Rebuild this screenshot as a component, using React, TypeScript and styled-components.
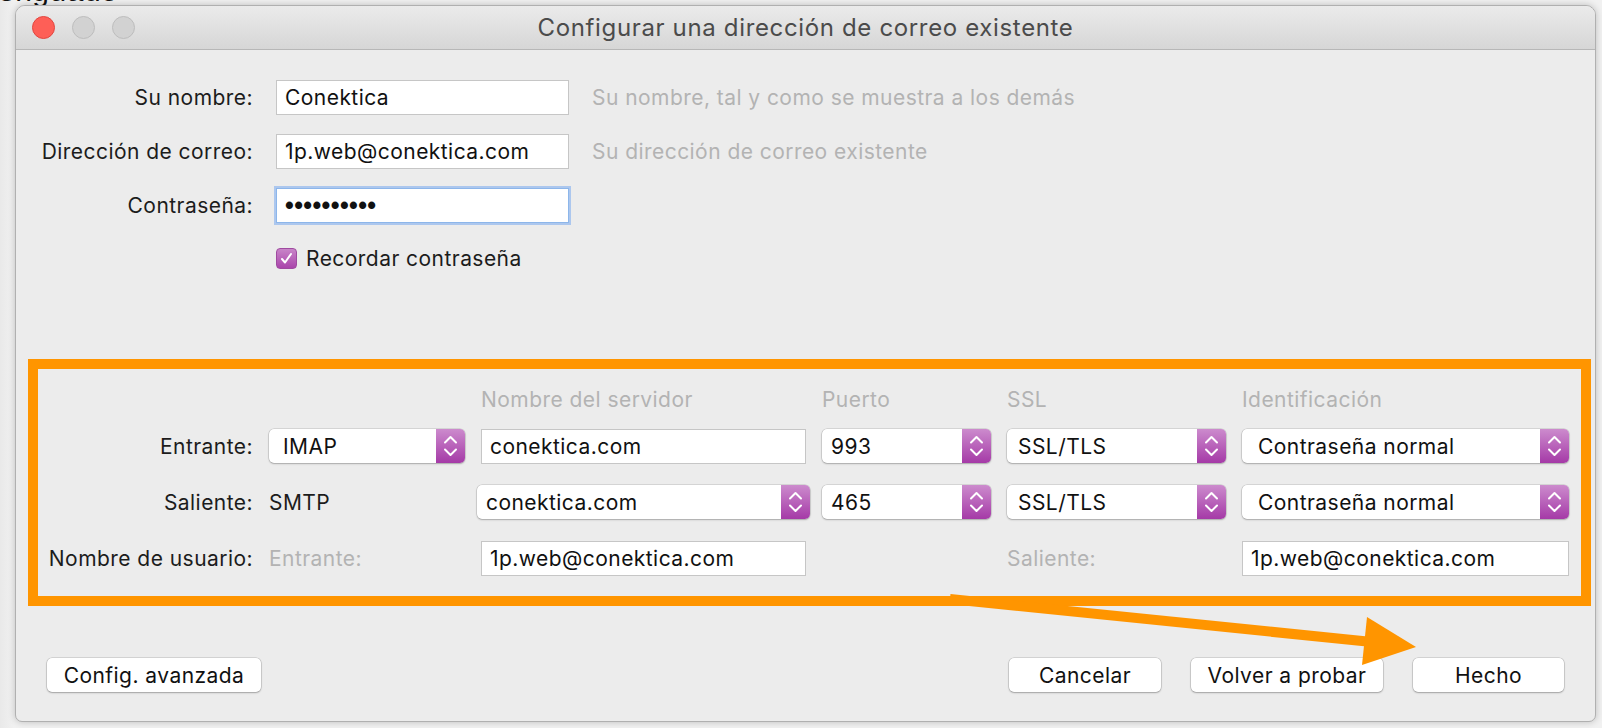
import React from "react";
import styled, { createGlobalStyle, css } from "styled-components";

const FONT = `Inter, "Helvetica Neue", "Liberation Sans", Arial, sans-serif`;

const text = css`
  font-family: ${FONT};
  font-size: 21px;
  letter-spacing: 0.45px;
`;

const Global = createGlobalStyle`
  html, body { margin: 0; padding: 0; }
  body {
    background: #efefef;
    font-family: ${FONT};
    overflow: hidden;
  }
  * { box-sizing: border-box; }
`;

const Page = styled.div`
  position: relative;
  width: 1602px;
  height: 728px;
  padding: 5px 6px 6px 15px;
  background: linear-gradient(90deg, #e9e9e9 0px, #f1f1f1 14px, #f1f1f1 100%);
  overflow: hidden;
`;

const BehindText = styled.div`
  position: absolute;
  left: -2px;
  top: -26px;
  font-family: "Liberation Sans", Arial, sans-serif;
  font-size: 30px;
  letter-spacing: 0.5px;
  color: #111;
  z-index: 0;
`;

const Window = styled.div`
  position: relative;
  z-index: 1;
  width: 1581px;
  height: 717px;
  display: flex;
  flex-direction: column;
  background: #ececec;
  border: 1px solid #b0b0b0;
  border-radius: 10px 10px 7px 7px;
  box-shadow: 0 0 7px rgba(0, 0, 0, 0.22);
  overflow: hidden;
`;

const TitleBar = styled.div`
  height: 44px;
  flex: none;
  display: grid;
  grid-template-columns: 1fr auto 1fr;
  align-items: center;
  background: linear-gradient(180deg, #ebebeb 0%, #d6d6d6 100%);
  border-bottom: 1px solid #b7b7b7;
`;

const Lights = styled.div`
  display: flex;
  gap: 17px;
  padding-left: 16px;
`;

const Light = styled.span<{ $red?: boolean }>`
  width: 23px;
  height: 23px;
  border-radius: 50%;
  background: ${(p) => (p.$red ? "#fe5f57" : "#d2d2d2")};
  border: 1px solid ${(p) => (p.$red ? "#e2463f" : "#bdbdbd")};
`;

const Title = styled.div`
  font-size: 24px;
  letter-spacing: 0.65px;
  color: #4b4b4b;
`;

const Content = styled.div`
  flex: 1;
  display: flex;
  flex-direction: column;
  padding: 30px 0 29px 0;
`;

const TopForm = styled.div`
  display: grid;
  grid-template-columns: 237px 293px auto;
  grid-template-rows: 35px 35px 35px 32px;
  column-gap: 23px;
  row-gap: 19px;
  align-items: center;
`;

const Label = styled.div<{ $muted?: boolean; $align?: string }>`
  ${text};
  color: ${(p) => (p.$muted ? "#b3b3b3" : "#1c1c1c")};
  text-align: ${(p) => p.$align ?? "right"};
  white-space: nowrap;
`;

const TextField = styled.div<{ $focused?: boolean }>`
  ${text};
  height: 35px;
  display: flex;
  align-items: center;
  padding-left: 8px;
  background: #fff;
  border: 1px solid ${(p) => (p.$focused ? "#8db6ea" : "#c6c6c6")};
  box-shadow: ${(p) =>
    p.$focused ? "0 0 0 2px rgba(120, 170, 240, 0.55)" : "none"};
  color: #111;
  white-space: nowrap;
  overflow: hidden;
`;

const Dots = styled.span`
  font-family: "Liberation Sans", Arial, sans-serif;
  font-size: 25px;
  letter-spacing: 0.4px;
  font-weight: bold;
  line-height: 1;
`;

const Hint = styled.div`
  ${text};
  color: #b3b3b3;
  white-space: nowrap;
`;

const CheckRow = styled.label`
  ${text};
  grid-column: 2 / 4;
  display: flex;
  align-items: center;
  gap: 9px;
  color: #1c1c1c;
`;

const CheckBox = styled.span`
  width: 21px;
  height: 21px;
  border-radius: 4px;
  background: linear-gradient(180deg, #c884c8 0%, #aa45ab 100%);
  border: 1px solid #9f4aa0;
  display: flex;
  align-items: center;
  justify-content: center;
`;

const ServerBox = styled.div`
  margin: 85px 4px 0 12px;
  border: 10px solid #ff9500;
  padding: 24px 0 21px 0;
`;

const ServerGrid = styled.div`
  display: grid;
  grid-template-columns: 215px 196px 325px 169px 219px 327px;
  grid-template-rows: 14px 34px 34px 34px;
  column-gap: 16px;
  row-gap: 22px;
  align-items: center;
`;

const ColHead = styled.div`
  ${text};
  line-height: 14px;
  color: #b3b3b3;
  white-space: nowrap;
`;

const Popup = styled.div<{ $pad?: number; $wide?: boolean }>`
  ${text};
  height: 34px;
  display: flex;
  align-items: center;
  margin: ${(p) => (p.$wide ? "0 -4px" : "0")};
  padding-left: ${(p) => p.$pad ?? 14}px;
  background: #fff;
  border-radius: 5px;
  box-shadow: 0 0 0 0.5px rgba(0, 0, 0, 0.18), 0 1px 2px rgba(0, 0, 0, 0.22);
  color: #111;
  white-space: nowrap;
  overflow: hidden;
`;

const PopupText = styled.span`
  flex: 1;
`;

const Stepper = styled.span`
  width: 29px;
  height: 34px;
  flex: none;
  background: linear-gradient(180deg, #cc8bcd 0%, #a53aa7 100%);
  display: flex;
  align-items: center;
  justify-content: center;
`;

const ButtonRow = styled.div`
  margin-top: 52px;
  display: flex;
  align-items: center;
  padding: 0 31px;
`;

const Spacer = styled.div`
  flex: 1;
`;

const Button = styled.button<{ $w: number }>`
  ${text};
  width: ${(p) => p.$w}px;
  height: 34px;
  margin-left: 30px;
  background: #fff;
  border: none;
  border-radius: 5px;
  box-shadow: 0 0 0 0.5px rgba(0, 0, 0, 0.2), 0 1px 2px rgba(0, 0, 0, 0.24);
  color: #111;
  padding: 0;
  &:first-child {
    margin-left: 0;
  }
`;

const Overlay = styled.svg`
  position: absolute;
  left: 0;
  top: 0;
  z-index: 2;
  pointer-events: none;
`;

const StepIcon = () => (
  <svg width="29" height="34" viewBox="0 0 29 34">
    <polyline
      points="9,13.5 14.5,8 20,13.5"
      fill="none"
      stroke="#fff"
      strokeWidth="2"
      strokeLinecap="round"
      strokeLinejoin="round"
    />
    <polyline
      points="9,20.5 14.5,26 20,20.5"
      fill="none"
      stroke="#fff"
      strokeWidth="2"
      strokeLinecap="round"
      strokeLinejoin="round"
    />
  </svg>
);

const Select = ({
  value,
  pad,
  wide,
}: {
  value: string;
  pad?: number;
  wide?: boolean;
}) => (
  <Popup $pad={pad} $wide={wide}>
    <PopupText>{value}</PopupText>
    <Stepper>
      <StepIcon />
    </Stepper>
  </Popup>
);

export default function App() {
  return (
    <>
      <Global />
      <Page>
        <BehindText>enguado</BehindText>
        <Window>
          <TitleBar>
            <Lights>
              <Light $red />
              <Light />
              <Light />
            </Lights>
            <Title>Configurar una dirección de correo existente</Title>
            <div />
          </TitleBar>
          <Content>
            <TopForm>
              <Label>Su nombre:</Label>
              <TextField>Conektica</TextField>
              <Hint>Su nombre, tal y como se muestra a los demás</Hint>

              <Label>Dirección de correo:</Label>
              <TextField>1p.web@conektica.com</TextField>
              <Hint>Su dirección de correo existente</Hint>

              <Label>Contraseña:</Label>
              <TextField $focused>
                <Dots>••••••••••</Dots>
              </TextField>
              <div />

              <div />
              <CheckRow>
                <CheckBox>
                  <svg width="15" height="15" viewBox="0 0 15 15">
                    <polyline
                      points="3,8 6,11.5 12,3"
                      fill="none"
                      stroke="#fff"
                      strokeWidth="2"
                      strokeLinecap="round"
                      strokeLinejoin="round"
                    />
                  </svg>
                </CheckBox>
                Recordar contraseña
              </CheckRow>
            </TopForm>

            <ServerBox>
              <ServerGrid>
                <div />
                <div />
                <ColHead>Nombre del servidor</ColHead>
                <ColHead>Puerto</ColHead>
                <ColHead>SSL</ColHead>
                <ColHead>Identificación</ColHead>

                <Label>Entrante:</Label>
                <Select value="IMAP" />
                <TextField>conektica.com</TextField>
                <Select value="993" pad={9} />
                <Select value="SSL/TLS" pad={11} />
                <Select value="Contraseña normal" pad={16} />

                <Label>Saliente:</Label>
                <Label $align="left">SMTP</Label>
                <Select value="conektica.com" pad={9} wide />
                <Select value="465" pad={9} />
                <Select value="SSL/TLS" pad={11} />
                <Select value="Contraseña normal" pad={16} />

                <Label>Nombre de usuario:</Label>
                <Label $muted $align="left">
                  Entrante:
                </Label>
                <TextField>1p.web@conektica.com</TextField>
                <div />
                <Label $muted $align="left">
                  Saliente:
                </Label>
                <TextField>1p.web@conektica.com</TextField>
              </ServerGrid>
            </ServerBox>

            <ButtonRow>
              <Button $w={214}>Config. avanzada</Button>
              <Spacer />
              <Button $w={152}>Cancelar</Button>
              <Button $w={192}>Volver a probar</Button>
              <Button $w={151}>Hecho</Button>
            </ButtonRow>
          </Content>
        </Window>
        <Overlay width="1602" height="728" viewBox="0 0 1602 728">
          <line
            x1="950"
            y1="599"
            x2="1372"
            y2="642"
            stroke="#ff9500"
            strokeWidth="10"
          />
          <polygon points="1367,617 1416,647 1362,665" fill="#ff9500" />
        </Overlay>
      </Page>
    </>
  );
}
